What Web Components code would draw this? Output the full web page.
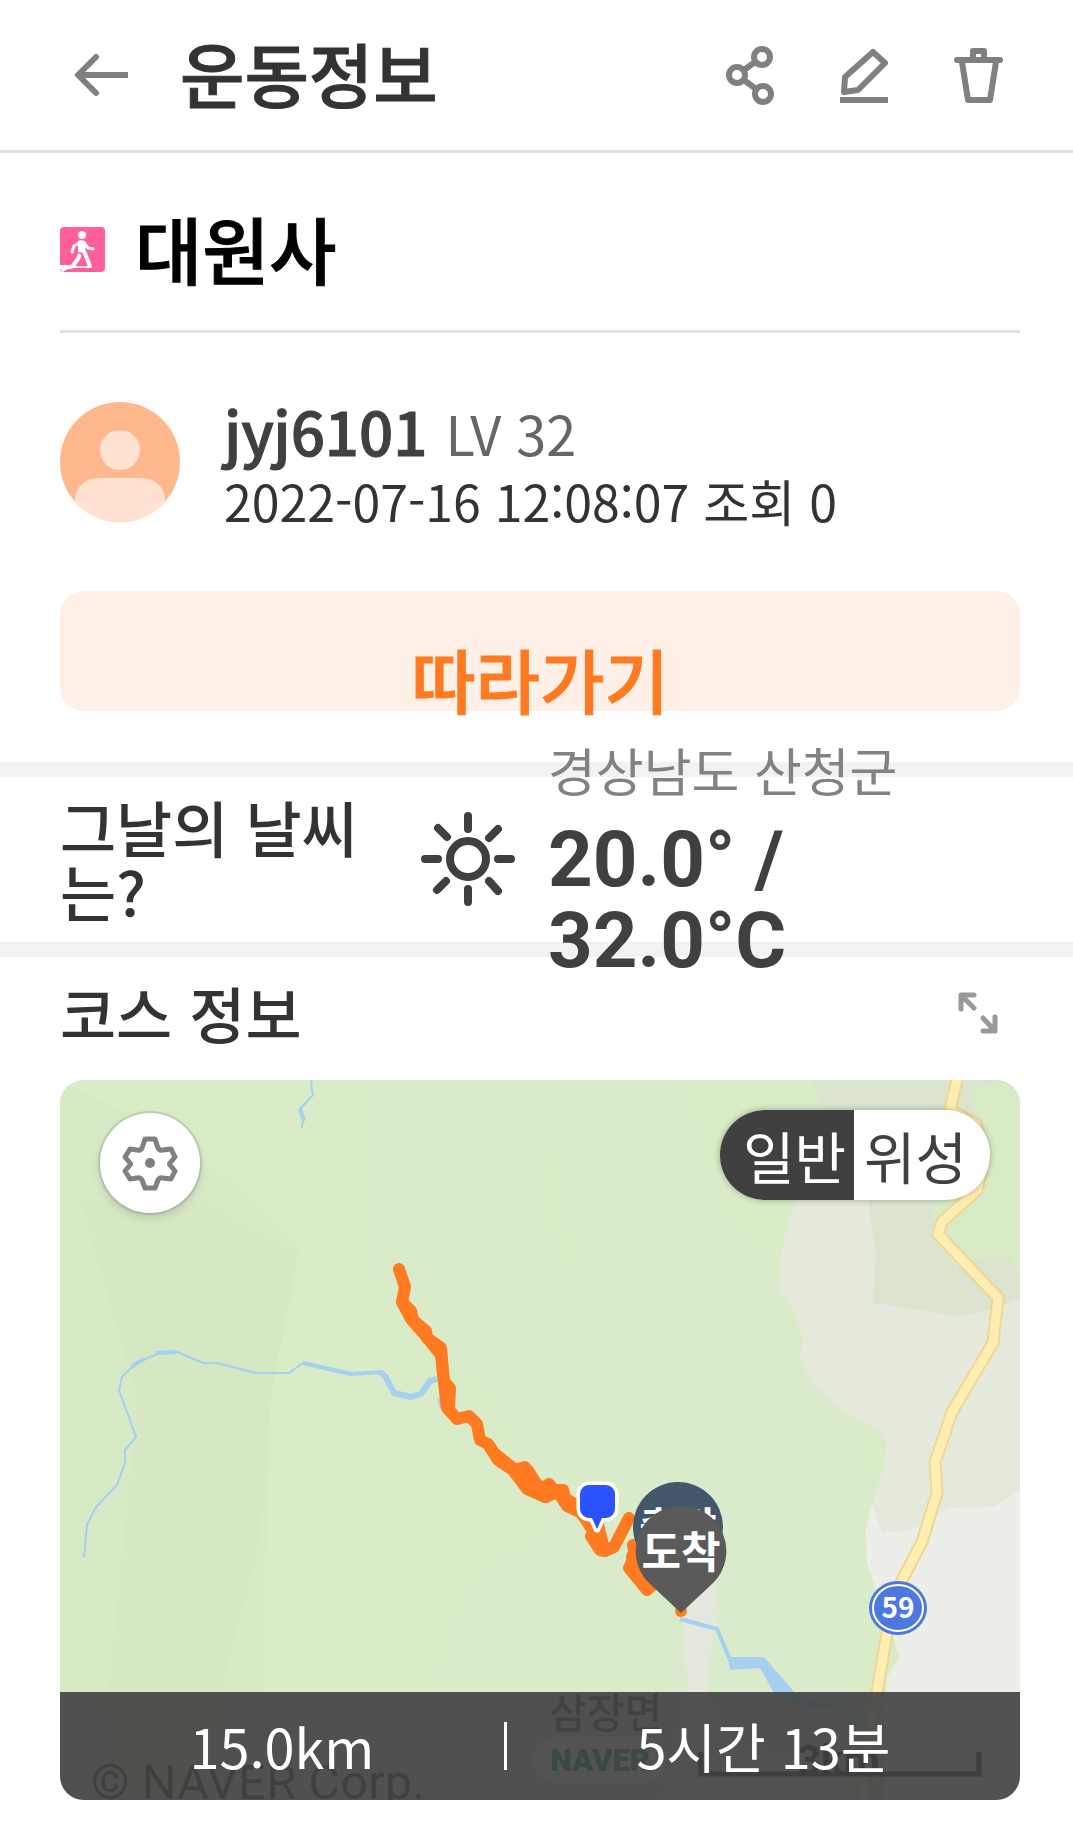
<!DOCTYPE html>
<html lang="ko">
<head>
<meta charset="utf-8">
<meta name="viewport" content="width=device-width, initial-scale=1">
<title>운동정보</title>
<style>
body{
    margin: 0;
    background-color: #fff;
    color: #333;
    font-family: "Noto Sans CJK KR", sans-serif;
    --side: 60px;
    --side-end: 53px;
}
</style>
</head>
<body>
<workout-page></workout-page>

<script>
const app_header = document.createElement('template');

app_header.innerHTML = `
<style>
:host{
    display: block;
    border-bottom: 3px solid #e2e2e2;
}

header{
    display: flex;
    align-items: center;
    padding: 25px 65px 25px 71px;
}

h1{
    flex: 1;
    margin: 0 0 4px 49px;
    font-size: 70px;
    font-weight: 500;
    line-height: 96px;
    -webkit-text-stroke: 1px #333;
}

nav{
    display: flex;
    gap: 54px;
}

button{
    width: 60px;
    height: 60px;
    padding: 0;
    border: 0;
    background: none;
}

svg{
    display: block;
    fill: none;
    stroke: #808080;
    stroke-width: 6;
    stroke-linejoin: round;
}
</style>

<header>
    <button type="button" aria-label="뒤로">
        <svg width="60" height="60" viewBox="0 0 60 60"><path d="M25 12L7 30l18 18" stroke-linecap="round"/><path d="M8 30h49"/></svg>
    </button>
    <h1><slot></slot></h1>
    <nav>
        <button type="button" aria-label="공유">
            <svg width="60" height="60" viewBox="0 0 60 60"><circle cx="42" cy="12" r="8"/><circle cx="17" cy="30" r="8"/><circle cx="43" cy="49" r="8"/><path d="M24 25l11-8M24 35l12 9"/></svg>
        </button>
        <button type="button" aria-label="수정">
            <svg width="60" height="60" viewBox="0 0 60 60"><path d="M39 7l12 11-27 27-14 2 1-15z"/><path d="M6 55h48"/></svg>
        </button>
        <button type="button" aria-label="삭제">
            <svg width="60" height="60" viewBox="0 0 60 60"><path d="M9 15h43" stroke-linecap="round"/><path d="M25 14V6h11v8M14 17l6 38h22l6-38"/></svg>
        </button>
    </nav>
</header>
`

const course_title = document.createElement('template');

course_title.innerHTML = `
<style>
:host{
    display: flex;
    align-items: center;
    gap: 30px;
    margin: 0 var(--side-end) 0 var(--side);
    padding: 47px 0 32px;
    border-bottom: 3px solid #e4e4e4;
}

h2{
    margin: 0 0 4px;
    color: black;
    font-size: 73px;
    font-weight: 500;
    line-height: 94px;
    -webkit-text-stroke: 1px black;
}
</style>

<svg width="45" height="45" viewBox="0 0 45 45" role="img" aria-label="걷기">
    <rect width="45" height="45" rx="4" fill="#ff5f9b"/>
    <circle cx="22" cy="8" r="4" fill="#fff"/>
    <path d="M19 16l-5 3-2 6M25 17l3 4 5 1" fill="none" stroke="#fff" stroke-width="3" stroke-linecap="round"/>
    <path d="M18 14q4-2 8 1l-1 11-7-1z" fill="#fff"/>
    <path d="M24 24l6 15M20 27l-2 5-6 8" fill="none" stroke="#fff" stroke-width="4"/>
    <path d="M0 38h11q6 2 21 1v2H14q-8 1-11 4L0 42z" fill="#fff"/>
</svg>
<h2><slot></slot></h2>
`

const user_profile = document.createElement('template');

user_profile.innerHTML = `
<style>
:host{
    display: flex;
    align-items: center;
    gap: 44px;
    margin: 59px var(--side-end) 59px var(--side);
}

svg{
    flex: none;
}

.nameRow{
    display: flex;
    align-items: baseline;
    gap: 18px;
}

.name{
    color: #404040;
    font-size: 60px;
    font-weight: 500;
    line-height: 76px;
    -webkit-text-stroke: 1px #404040;
}

.level{
    color: #666;
    font-size: 54px;
    line-height: 64px;
}

.date{
    font-size: 50px;
    line-height: 64px;
}
</style>

<svg width="120" height="120" viewBox="0 0 120 120" role="img" aria-label="프로필">
    <defs><clipPath id="round"><circle cx="60" cy="60" r="60"/></clipPath></defs>
    <g clip-path="url(#round)">
        <rect width="120" height="120" fill="#ffb88d"/>
        <circle cx="60" cy="48" r="20" fill="#ffe2d1"/>
        <path d="M15 120V98a22 22 0 0 1 22-22h46a22 22 0 0 1 22 22v22z" fill="#ffe2d1"/>
    </g>
</svg>
<div>
    <div class="nameRow">
        <span class="name"><slot name="name"></slot></span>
        <span class="level"><slot name="level"></slot></span>
    </div>
    <div class="date"><slot name="date"></slot></div>
</div>
`

const follow_button = document.createElement('template');

follow_button.innerHTML = `
<style>
:host{
    display: block;
    margin: 0 var(--side-end) 51px var(--side);
}

button{
    display: block;
    width: 100%;
    padding: 56px 0 0;
    border: 0;
    border-radius: 24px;
    background-color: #fff0e7;
    color: #ff7a20;
    font-family: inherit;
    font-size: 70px;
    font-weight: 500;
    line-height: 64px;
    -webkit-text-stroke: 1px #ff7a20;
}
</style>

<button type="button"><slot></slot></button>
`

const day_weather = document.createElement('template');

day_weather.innerHTML = `
<style>
:host{
    display: flex;
    align-items: center;
    padding: 18px var(--side-end) 19px var(--side);
    border-top: 15px solid #f1f2f4;
    border-bottom: 15px solid #f1f2f4;
}

h3{
    flex: 0 1 320px;
    margin: 0;
    font-size: 61px;
    font-weight: 500;
    line-height: 64px;
}

svg{
    flex: none;
    margin: 0 32px 0 40px;
    fill: none;
    stroke: #404040;
    stroke-width: 8;
    stroke-linecap: round;
}

/* taller than the row, runs over both dividers */
.weatherInfo{
    flex: 1;
    margin: -80px 0;
    padding-bottom: 18px;
}

.region{
    color: #828282;
    font-size: 52px;
    line-height: 99px;
}

.temp{
    color: #404040;
    font-family: Roboto, sans-serif;
    font-size: 78px;
    font-weight: 700;
    line-height: 81px;
}
</style>

<h3><slot></slot></h3>
<svg width="96" height="96" viewBox="0 0 96 96" role="img" aria-label="맑음">
    <circle cx="48" cy="48" r="18"/>
    <path d="M48 5v13M48 78v13M5 48h13M78 48h13M18 17l9 9M78 18l-9 9M17 79l9-9M78 80l-9-10"/>
</svg>
<div class="weatherInfo">
    <div class="region"><slot name="region"></slot></div>
    <div class="temp"><slot name="temp"></slot></div>
</div>
`

const map_switch = document.createElement('template');

map_switch.innerHTML = `
<style>
:host{
    display: flex;
    border-radius: 45px;
    overflow: hidden;
    box-shadow: 0 0 6px rgba(0, 0, 0, 0.3);
}

button{
    padding: 0 23px 0 10px;
    border: 0;
    background-color: #fff;
    color: #404040;
    font-family: inherit;
    font-size: 56px;
    line-height: 90px;
}

button[aria-pressed="true"]{
    padding: 0 8px 0 23px;
    background-color: #404040;
    color: white;
}
</style>

<button type="button" aria-pressed="true">일반</button>
<button type="button" aria-pressed="false">위성</button>
`

const course_map = document.createElement('template');

course_map.innerHTML = `
<style>
:host{
    display: block;
    position: relative;
    margin: 0 var(--side-end) 42px var(--side);
    border-radius: 24px;
    overflow: hidden;
}

.map{
    display: block;
    width: 100%;
    height: auto;
}

.settings{
    position: absolute;
    top: 33px;
    left: 40px;
    width: 100px;
    height: 100px;
    padding: 0;
    border: 0;
    border-radius: 50%;
    background-color: #fff;
    box-shadow: 0 0 0 2px rgba(0, 0, 0, 0.1), 0 4px 10px rgba(0, 0, 0, 0.15);
}

.settings svg{
    display: block;
    margin: auto;
}

map-switch{
    position: absolute;
    top: 30px;
    right: 30px;
}

.summary{
    position: absolute;
    left: 0;
    right: 0;
    bottom: 0;
    display: flex;
    align-items: center;
    justify-content: space-evenly;
    background-color: rgba(64, 64, 64, 0.9);
    color: white;
    font-size: 54px;
    line-height: 108px;
}

.line{
    width: 3px;
    height: 48px;
    background-color: #fff;
}
</style>

<svg class="map" viewBox="0 0 960 720" role="img" aria-label="코스 지도">
    <rect width="960" height="720" fill="#d9ebc7"/>
    <path d="M0 0l80 40 90 60 70 70-30 150-10 400H0z" fill="#d7e9c5"/>
    <path d="M20 120l120 0 97 50-25 140-14 160-40 150-30 100-60 0-20-100 30-300z" fill="#d5e7c3"/>
    <path d="M300 0h190v160l50 80 40 60 60 120 0 130-60 170H340l60-200 90-80-60-120-120-120z" fill="#d9ebc8"/>
    <path d="M490 0h130l40 140 60 60 20 90 60 60-5 370H620l-30-200-50-200z" fill="#daebcb"/>

    <!-- land -->
    <path d="M752 0l9 27-15 60-8 36-10 20-8 37 1 30 15 27 7 20-3 20 10 23 20 20 16 13 34 19 7 11-4 27-11 35-6 25 1 33 26 74 7 20-13 20-4 123h137V0z" fill="#e5e9dc"/>
    <path d="M752 0l9 27 30 60 17 33 8 53-3 50 48 7 37 6 33-6 30-13V0z" fill="#dae4cf"/>
    <path d="M913 10l21-8 26 6v186l-10-19-14 8-16-3-24 7-17-20-7-40 44-60z" fill="#d8ebc6"/>
    <path d="M812 425l10 28 25-2 13-6 30-17 45-1 25-17v310H823l4-123 13-20-7-20-26-74-1-33z" fill="#ecefe8"/>
    <path d="M622 535l18-35 15 5 4 25-9 45-2 40 30 50 120 20v35H600l28-108z" fill="#e4e8dc"/>

    <!-- streams -->
    <g fill="none" stroke="#a5d0f0" stroke-width="2" stroke-linejoin="round">
        <path d="M252 0l-1 5 2 10-13 14 3 11-1 8"/>
        <path d="M24 477l3-32 9-18 21-22 8-22V370l11-13-17-47 3-13 14-14 26-11h15l26 11h14l39 10h33l14-10 48 11 31-2"/>
        <path d="M240 29l4 12M72 286l12-7M96 273l20-1M243 283l48 11 31-2" stroke-width="4"/>
        <path d="M320 292l5 4 9 17 17 4 10-3 9-13 7-2M380 318l3 10" stroke-width="6"/>
        <path d="M620 539l37 10 14 33" stroke-width="4"/>
        <path d="M668 577l36 0 31 36 15 6 20-1 25 19 15 35-8 48h-4l6-46-15-32-22-15-22 3-27-10-18-32-30 2z" fill="#a5d0f0" stroke="none"/>
    </g>

    <!-- road -->
    <g fill="none" stroke-linejoin="round">
        <path d="M897 0l-7 30 26 14 8 36-7 30-35 32-4 12 60 64-5 45-34 57-7 12-17 50 2 31-15 49-20 38-15 53-10 59-15 108" stroke="#f1d694" stroke-width="13"/>
        <path d="M897 0l-7 30 26 14 8 36-7 30-35 32-4 12 60 64-5 45-34 57-7 12-17 50 2 31-15 49-20 38-15 53-10 59-15 108" stroke="#ffeeb2" stroke-width="9"/>
    </g>
    <ellipse cx="838" cy="528" rx="29" ry="27" fill="#4c78e0"/>
    <ellipse cx="838" cy="528" rx="25" ry="23" fill="#4c78e0" stroke="#fff" stroke-width="2"/>
    <text x="838" y="538" fill="#fff" font-size="28" font-weight="700" text-anchor="middle">59</text>

    <!-- walked track -->
    <g fill="none" stroke="#ff7a20" stroke-width="12" stroke-linecap="round" stroke-linejoin="round">
        <path d="M339 189l6 18-3 15 9 17 14 16 16 20 3 28 3 25 10 11 12-3 8 8 3 16 8 4 10 16 15 10 14 19 18 8 13-5 9 14 13 6 12 13"/>
        <path d="M342 222l9 9 2 9 13 11 1 7 14 10 3 34 6 6-1 20"/>
        <path d="M428 364l6 9 21 17 10-3 10 15 7 7 7-5 5 6h9l2 8 12 8 18 28"/>
        <path d="M458 392l8 1 10 16 10 5" stroke-width="18"/>
        <path d="M537 440l3 13-9 3 9 14 5 1 9-4 15-29M540 453l3 12M573 465l2 10-6 13 18 22 11-10M578 480l6 10"/>
        <path d="M575 477l14 22" stroke-width="18"/>
    </g>
    <circle cx="621" cy="531" r="6" fill="#ff7a20"/>

    <!-- pins -->
    <path d="M530 405h16a9 9 0 0 1 9 9v15a9 9 0 0 1-9 9h-4l-5 11-5-11h-3a9 9 0 0 1-9-9v-15a9 9 0 0 1 10-9z" fill="#2a52ff" stroke="#fff" stroke-width="7" stroke-linejoin="round" paint-order="stroke"/>
    <circle cx="618" cy="447" r="45" fill="#44566a"/>
    <text x="618" y="463" fill="#fff" font-size="42" font-weight="700" text-anchor="middle">출발</text>
    <path d="M621 426a45 45 0 0 1 32 77l-32 30-32-30a45 45 0 0 1 32-77z" fill="#5a5a5a"/>
    <text x="621" y="488" fill="#fff" font-size="43" font-weight="700" text-anchor="middle">도착</text>

    <!-- provider labels -->
    <text x="489" y="648" fill="#555" font-size="41" font-weight="500">삼장면</text>
    <rect x="473" y="657" width="133" height="46" rx="23" fill="#fff"/>
    <text x="490" y="691" fill="#00a040" font-family="Roboto" font-size="31" font-weight="900">NAVER</text>
    <path d="M641 672v22h278v-22" fill="none" stroke="#000" stroke-width="5" opacity="0.8"/>
    <text x="737" y="695" fill="#222" font-family="Roboto" font-size="42" font-weight="700">3km</text>
    <text x="31" y="719" fill="#000" fill-opacity="0.7" font-family="Roboto" font-size="49">© NAVER Corp.</text>
</svg>
<button class="settings" type="button" aria-label="지도 설정">
    <svg width="60" height="60" viewBox="0 0 60 60">
        <path d="M25 6h10l3 9q2 3 5 2l8-1 4 8-5 6q-1 1 0 2l5 6-4 8-8-1q-3-1-5 2l-3 8H25l-3-8q-2-3-5-2l-7 1-5-8 5-6q1-1 0-2l-5-6 5-8 7 1q3 1 5-2z" fill="none" stroke="#808080" stroke-width="5" stroke-linejoin="round"/>
        <circle cx="30" cy="30" r="5" fill="#808080"/>
    </svg>
</button>
<map-switch></map-switch>
<div class="summary">
    <span><slot name="distance"></slot></span>
    <span class="line"></span>
    <span><slot name="time"></slot></span>
</div>
`

const section_heading = document.createElement('template');

section_heading.innerHTML = `
<style>
:host{
    display: flex;
    align-items: center;
    justify-content: space-between;
    padding: 8px 65px 19px var(--side);
}

h3{
    margin: 0;
    font-size: 61px;
    font-weight: 500;
    line-height: 96px;
}

button{
    width: 60px;
    height: 60px;
    padding: 0;
    border: 0;
    background: none;
}

svg{
    display: block;
}
</style>

<h3><slot></slot></h3>
<button type="button" aria-label="크게 보기">
    <svg width="60" height="60" viewBox="0 0 60 60" fill="none" stroke="#999" stroke-width="5" stroke-linecap="round" stroke-linejoin="round">
        <path d="M26 12H13v14M14 13l12 12M47 34v14H35M46 47L35 35"/>
    </svg>
</button>
`

const workout_page = document.createElement('template');

workout_page.innerHTML = `
<style>
:host{
    display: block;
}
</style>

<app-header>운동정보</app-header>
<main>
    <course-title>대원사</course-title>
    <user-profile>
        <span slot="name">jyj6101</span>
        <span slot="level">LV 32</span>
        <span slot="date">2022-07-16 12:08:07 조회 0</span>
    </user-profile>
    <follow-button>따라가기</follow-button>
    <day-weather>
        그날의 날씨는?
        <span slot="region">경상남도 산청군</span>
        <span slot="temp">20.0° / 32.0°C</span>
    </day-weather>
    <section-heading>코스 정보</section-heading>
    <course-map>
        <span slot="distance">15.0km</span>
        <span slot="time">5시간 13분</span>
    </course-map>
</main>
`

function defineElement(name, template) {
    window.customElements.define(name, class extends HTMLElement {
        constructor() {
            super();
            this.attachShadow({mode: 'open'});
            this.shadowRoot.appendChild(template.content.cloneNode(true));
        }
    });
}

defineElement('app-header', app_header);
defineElement('course-title', course_title);
defineElement('user-profile', user_profile);
defineElement('follow-button', follow_button);
defineElement('day-weather', day_weather);
defineElement('section-heading', section_heading);
defineElement('map-switch', map_switch);
defineElement('course-map', course_map);
defineElement('workout-page', workout_page);
</script>
</body>
</html>
